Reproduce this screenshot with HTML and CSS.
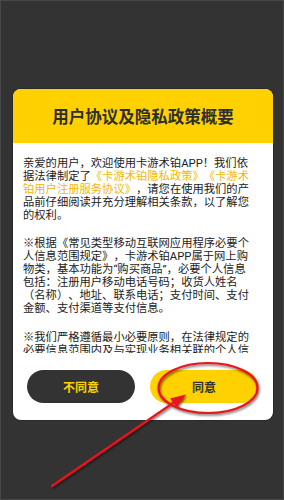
FILE: index.html
```html
<!DOCTYPE html>
<html lang="zh-CN">
<head>
<meta charset="utf-8">
<link rel="stylesheet" href="styles.css">
</head>
<body>
<div class="page">
  <div class="dialog">
    <div class="dialog-head">用户协议及隐私政策概要</div>
    <div class="dialog-body">
      <p>亲爱的用户，欢迎使用卡游术铂APP！我们依据法律制定了<span class="link">《卡游术铂隐私政策》《卡游术铂用户注册服务协议》</span>，请您在使用我们的产品前仔细阅读并充分理解相关条款，以了解您的权利。</p>
      <p>※根据《常见类型移动互联网应用程序必要个人信息范围规定》，卡游术铂APP属于网上购物类，基本功能为“购买商品”，必要个人信息包括：注册用户移动电话号码；收货人姓名（名称）、地址、联系电话；支付时间、支付金额、支付渠道等支付信息。</p>
      <p>※我们严格遵循最小必要原则，在法律规定的必要信息范围内及与实现业务相关联的个人信息，我们才会收集和使用。</p>
    </div>
    <div class="dialog-foot">
      <button class="btn btn-dark">不同意</button>
      <button class="btn btn-yellow">同意</button>
    </div>
  </div>
  <svg class="annot" width="284" height="500" viewBox="0 0 284 500">
    <defs>
      <filter id="sh" x="-20%" y="-20%" width="140%" height="140%">
        <feDropShadow dx="1" dy="1.5" stdDeviation="1" flood-color="#000" flood-opacity="0.6"/>
      </filter>
    </defs>
    <g filter="url(#sh)">
      <ellipse cx="208" cy="388" rx="49.5" ry="25" fill="none" stroke="#e8141a" stroke-width="2.2"/>
      <line x1="52" y1="486" x2="176" y2="401" stroke="#e8141a" stroke-width="2.2" stroke-linecap="round"/>
      <polygon points="186,394.5 176.8,407.5 170.2,398.5" fill="#e8141a"/>
    </g>
  </svg>
</div>
</body>
</html>
```
FILE: styles.css
```css
* { box-sizing: border-box; }
html, body { margin: 0; padding: 0; }
body {
  font-family: Roboto, "Noto Sans CJK SC", sans-serif;
  background: #333333;
}
.page {
  position: relative;
  width: 284px;
  height: 500px;
  border: 1px solid #474747;
  background: #333333;
  padding-top: 88px;
  padding-left: 12px;
  padding-right: 10px;
}
.dialog {
  width: 260px;
  background: #ffffff;
  border-radius: 8px;
  overflow: hidden;
  box-shadow: 0 0 0 1px #2a2a2a;
}
.dialog-head {
  height: 54px;
  background: #ffd100;
  color: #2e2e2e;
  font-size: 16.5px;
  font-weight: 700;
  display: flex;
  align-items: center;
  justify-content: center;
  letter-spacing: 0;
}
.dialog-body {
  height: 210px;
  overflow: hidden;
  padding: 13.5px 18px 0 10px;
  color: #222222;
  font-size: 11.3px;
  line-height: 13.1px;
  text-spacing-trim: space-all;
}
.dialog-body p {
  margin: 0 0 15px 0;
}
.link { color: #f2b705; }
.dialog-foot {
  display: flex;
  gap: 15px;
  padding: 17px 15px 17px 14px;
}
.btn {
  flex: 1;
  height: 33px;
  border: none;
  border-radius: 17px;
  font-family: Roboto, "Noto Sans CJK SC", sans-serif;
  font-size: 12px;
  font-weight: 700;
  padding: 0;
}
.btn-dark { background: #333333; color: #ffd100; }
.btn-yellow { background: #ffd100; color: #333333; }
.annot {
  position: absolute;
  left: -1px;
  top: -1px;
}
```
